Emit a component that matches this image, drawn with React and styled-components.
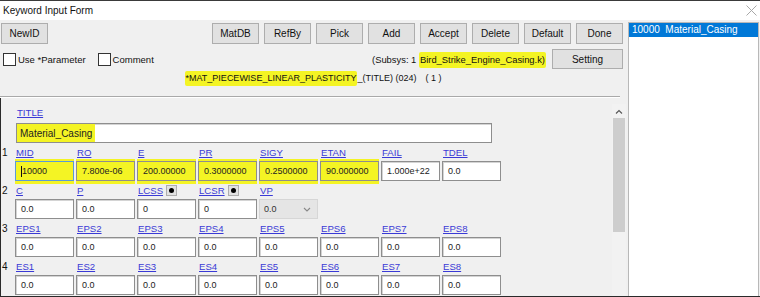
import React from "react";
import styled, { createGlobalStyle } from "styled-components";

const HL = "#f4f424";
const LINK = "#3a3ad6";

const Global = createGlobalStyle`
  html, body { margin: 0; padding: 0; background: #fff; }
  body { font-family: "Liberation Sans", Arial, sans-serif; font-size: 10px; color: #111; }
  * { box-sizing: border-box; }
`;

const Window = styled.div`
  width: 760px;
  height: 297px;
  display: flex;
  flex-direction: column;
  background: #f0f0f0;
  border-top: 1px solid #3a3a3a;
  border-bottom: 1px solid #2a2a2a;
  overflow: hidden;
`;

const TitleBar = styled.div`
  flex: none;
  height: 19px;
  background: #fff;
  display: flex;
  align-items: center;
  justify-content: space-between;
  padding: 0 3px 0 3px;
`;

const TitleText = styled.span`
  font-size: 10px;
  color: #111;
`;

const Body = styled.div`
  flex: 1;
  min-height: 0;
  display: flex;
`;

const Main = styled.div`
  width: 628px;
  flex: none;
  display: flex;
  flex-direction: column;
`;

const Toolbar = styled.div`
  display: flex;
  height: 21px;
  margin-top: 3px;
  padding: 0 5px 0 1px;
`;

const ButtonGroup = styled.div`
  display: flex;
  gap: 5px;
  margin-left: auto;
`;

const Button = styled.div`
  width: ${(p) => p.$w || 47}px;
  height: ${(p) => p.$h || 21}px;
  flex: none;
  display: flex;
  align-items: center;
  justify-content: center;
  background: #e1e1e1;
  border: 1px solid #adadad;
  color: #111;
  font-size: 10px;
`;

const OptionsRow = styled.div`
  display: flex;
  align-items: center;
  height: 20px;
  margin-top: 5px;
  padding: 0 5px 0 3px;
`;

const CheckItem = styled.label`
  display: flex;
  align-items: center;
  gap: 2px;
  margin-right: 12px;
  font-size: 9.5px;
  color: #111;
`;

const CheckBox = styled.span`
  width: 13px;
  height: 13px;
  border: 1px solid #333;
  background: #fff;
`;

const Subsys = styled.div`
  margin-left: auto;
  margin-right: 6px;
  font-size: 9.4px;
  color: #111;
  white-space: pre;
`;

const Mark = styled.span`
  background: ${HL};
  padding: 2px 1px 3px;
  border-radius: 2px;
`;

const BlockMark = styled.span`
  align-self: stretch;
  display: flex;
  align-items: center;
  padding: 0 3px;
  background: ${HL};
`;

const KeywordLine = styled.div`
  height: 18px;
  display: flex;
  align-items: center;
  justify-content: center;
  padding-right: 2px;
  font-size: 9px;
  color: #111;
  white-space: pre;
`;

const Gap = styled.span`
  margin-left: 9px;
`;

const Separator = styled.div`
  height: 2px;
  margin: 9px 8px 0 0;
  border-top: 1px solid #a9a9a9;
  border-bottom: 1px solid #fff;
`;

const Frame = styled.div`
  flex: 1;
  min-height: 0;
  display: flex;
  border-left: 1px solid #2a2a2a;
  margin-right: 2px;
`;

const Form = styled.div`
  flex: 1;
  padding-top: 8px;
  display: flex;
  flex-direction: column;
`;

const TitleBlock = styled.div`
  margin-left: 15px;
  display: flex;
  flex-direction: column;
`;

const Link = styled.span`
  color: ${LINK};
  text-decoration: underline;
  font-size: 9.6px;
  line-height: 14px;
`;

const TitleLabel = styled.div`
  height: 17px;
  padding-left: 1px;
`;

const Group = styled.div`
  display: flex;
  margin-top: 3px;
`;

const RowNum = styled.div`
  width: 14px;
  flex: none;
  padding-left: 1px;
  line-height: 14px;
  font-size: 10px;
  color: #111;
`;

const Cells = styled.div`
  display: grid;
  grid-template-columns: repeat(8, 59px);
  column-gap: 2px;
`;

const Cell = styled.div`
  display: flex;
  flex-direction: column;
`;

const FieldLabel = styled.div`
  height: 15px;
  padding-left: 1px;
  display: flex;
  align-items: flex-start;
  gap: 3px;
`;

const PickBtn = styled.span`
  width: 11px;
  height: 11px;
  margin-top: 1px;
  background: #e1e1e1;
  border: 1px solid #adadad;
  display: flex;
  align-items: center;
  justify-content: center;
  &::after {
    content: "";
    width: 5px;
    height: 5px;
    border-radius: 50%;
    background: #000;
  }
`;

const Field = styled.div`
  width: ${(p) => p.$w || 59}px;
  height: 20px;
  display: flex;
  align-items: center;
  padding: 0 5px;
  font-size: 9px;
  color: #222;
  white-space: pre;
  background: ${(p) => (p.$hl ? HL : "#fff")};
  border: 1px solid ${(p) => (p.$focus ? "#5a9ad8" : "#8e8e8e")};
  box-shadow: ${(p) =>
    p.$hl ? `0 3px 0 0 ${HL}, 0 -2px 0 0 ${HL}` : "inset 1px 1px 0 #d4d4d4"};
`;

const TitleField = styled(Field)`
  padding: 0;
  font-size: 10px;
`;

const Select = styled.div`
  width: 59px;
  height: 20px;
  display: flex;
  align-items: center;
  justify-content: space-between;
  padding: 0 6px 0 4px;
  background: #e5e5e5;
  border: 1px solid #d6d6d6;
  color: #333;
  font-size: 9px;
`;

const Caret = styled.span`
  width: 1px;
  height: 11px;
  background: #111;
`;

const Scrollbar = styled.div`
  width: 14px;
  flex: none;
  margin-top: 6px;
  display: flex;
  flex-direction: column;
  background: #f2f2f2;
`;

const ScrollArrow = styled.div`
  height: 14px;
  display: flex;
  align-items: center;
  justify-content: center;
`;

const Thumb = styled.div`
  height: 114px;
  margin: 0 1px;
  background: #cdcdcd;
`;

const ListPane = styled.div`
  flex: 1;
  margin: 2px 1px 0 0;
  background: #fff;
  border: 1px solid #b8b8b8;
  border-bottom: none;
`;

const ListItem = styled.div`
  height: 14px;
  line-height: 14px;
  padding-left: 3px;
  background: ${(p) => (p.$selected ? "#0078d7" : "transparent")};
  color: ${(p) => (p.$selected ? "#fff" : "#111")};
  font-size: 10px;
  white-space: pre;
`;

const rows = [
  {
    n: "1",
    cells: [
      { l: "MID", v: "10000", hl: true, focus: true },
      { l: "RO", v: "7.800e-06", hl: true },
      { l: "E", v: "200.00000", hl: true },
      { l: "PR", v: "0.3000000", hl: true },
      { l: "SIGY", v: "0.2500000", hl: true },
      { l: "ETAN", v: "90.000000", hl: true },
      { l: "FAIL", v: "1.000e+22" },
      { l: "TDEL", v: "0.0" },
    ],
  },
  {
    n: "2",
    cells: [
      { l: "C", v: "0.0" },
      { l: "P", v: "0.0" },
      { l: "LCSS", v: "0", pick: true },
      { l: "LCSR", v: "0", pick: true },
      { l: "VP", v: "0.0", select: true },
    ],
  },
  {
    n: "3",
    cells: Array.from({ length: 8 }, (_, i) => ({ l: `EPS${i + 1}`, v: "0.0" })),
  },
  {
    n: "4",
    cells: Array.from({ length: 8 }, (_, i) => ({ l: `ES${i + 1}`, v: "0.0" })),
  },
];

function CloseIcon() {
  return (
    <svg width="11" height="11" viewBox="0 0 11 11">
      <path d="M0.5 0.5 L10.5 10.5 M10.5 0.5 L0.5 10.5" stroke="#a8a8a8" strokeWidth="1" />
    </svg>
  );
}

function Chevron({ up }) {
  return (
    <svg width="8" height="5" viewBox="0 0 8 5">
      <path
        d={up ? "M1 4.5 L4 1.5 L7 4.5" : "M1 1 L4 4 L7 1"}
        fill="none"
        stroke={up ? "#555" : "#888"}
        strokeWidth="1.1"
      />
    </svg>
  );
}

export default function App() {
  return (
    <>
      <Global />
      <Window>
        <TitleBar>
          <TitleText>Keyword Input Form</TitleText>
          <CloseIcon />
        </TitleBar>
        <Body>
          <Main>
            <Toolbar>
              <Button>NewID</Button>
              <ButtonGroup>
                {["MatDB", "RefBy", "Pick", "Add", "Accept", "Delete", "Default", "Done"].map((b) => (
                  <Button key={b}>{b}</Button>
                ))}
              </ButtonGroup>
            </Toolbar>
            <OptionsRow>
              <CheckItem>
                <CheckBox />
                Use *Parameter
              </CheckItem>
              <CheckItem>
                <CheckBox />
                Comment
              </CheckItem>
              <Subsys>
                (Subsys: 1 <Mark>Bird_Strike_Engine_Casing.k)</Mark>
              </Subsys>
              <Button $w={71} $h={20}>Setting</Button>
            </OptionsRow>
            <KeywordLine>
              <Mark>*MAT_PIECEWISE_LINEAR_PLASTICITY</Mark>
              <span>_(TITLE) (024)</span>
              <Gap>( 1 )</Gap>
            </KeywordLine>
            <Separator />
            <Frame>
              <Form>
                <TitleBlock>
                  <TitleLabel>
                    <Link>TITLE</Link>
                  </TitleLabel>
                  <TitleField $w={476}>
                    <BlockMark>Material_Casing</BlockMark>
                  </TitleField>
                </TitleBlock>
                {rows.map((r) => (
                  <Group key={r.n}>
                    <RowNum>{r.n}</RowNum>
                    <Cells>
                      {r.cells.map((c) => (
                        <Cell key={c.l}>
                          <FieldLabel>
                            <Link>{c.l}</Link>
                            {c.pick && <PickBtn />}
                          </FieldLabel>
                          {c.select ? (
                            <Select>
                              <span>{c.v}</span>
                              <Chevron />
                            </Select>
                          ) : (
                            <Field $hl={c.hl} $focus={c.focus}>
                              {c.focus && <Caret />}
                              {c.v}
                            </Field>
                          )}
                        </Cell>
                      ))}
                    </Cells>
                  </Group>
                ))}
              </Form>
              <Scrollbar>
                <ScrollArrow>
                  <Chevron up />
                </ScrollArrow>
                <Thumb />
              </Scrollbar>
            </Frame>
          </Main>
          <ListPane>
            <ListItem $selected>{"10000  Material_Casing"}</ListItem>
          </ListPane>
        </Body>
      </Window>
    </>
  );
}
